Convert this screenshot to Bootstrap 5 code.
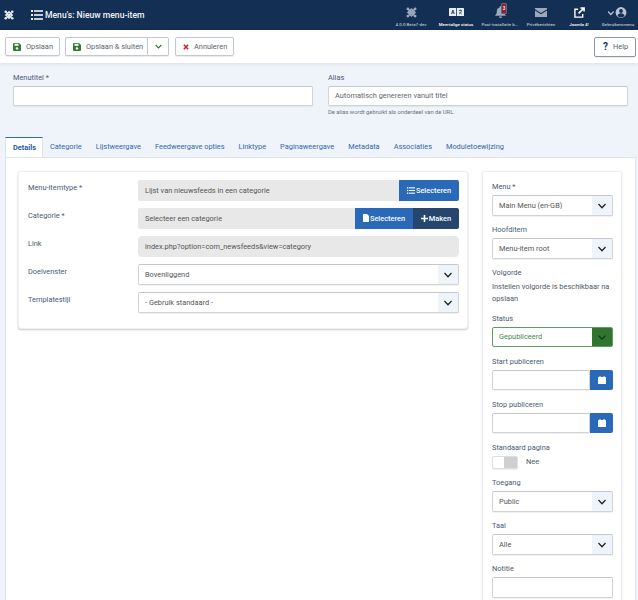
<!DOCTYPE html>
<html lang="nl">
<head>
<meta charset="utf-8">
<title>Menu's: Nieuw menu-item</title>
<link rel="stylesheet" href="https://cdn.jsdelivr.net/npm/bootstrap@5.3.0/dist/css/bootstrap.min.css">
<style>
html,body{height:600px;overflow:hidden}
body{font-family:Roboto,"Liberation Sans",sans-serif;font-size:7.4px;line-height:9px;background:#eff3fa;color:#3f4a5c}
svg{display:block;flex:none}
.topbar{height:30px;background:#132f53;color:#fff}
.logo{width:31px;padding-left:4px}
.page-title{font-size:8.6px;font-weight:500;gap:2px;color:#f1f4f8}
.status-list{margin-left:auto}
.status-item{height:30px;padding-top:4px;color:#b9c3d1;font-size:4.4px;line-height:5px;font-weight:500;white-space:nowrap;overflow:hidden}
.status-item .ico{height:16px;display:flex;align-items:center;justify-content:center;margin-bottom:2px;position:relative}
.status-item.lit{color:#fff}
.s1{width:46px}.s2{width:44px}.s3{width:44px}.s4{width:38px}.s5{width:38px}.s6{width:40px}
.toolbar{height:33px;background:#fff;padding:7px 2px 0 5px;box-shadow:0 1px 3px rgba(40,60,90,.1);position:relative}
.btn-tool{display:inline-flex;align-items:center;height:19px;padding:0 0 0 7px;gap:5px;font-size:7.4px;line-height:1;white-space:nowrap;color:#5b6470;background:#fff;border:1px solid #c4c8cd;border-radius:2px;box-shadow:0 1px 1px rgba(0,0,0,.08)}
.b-save{width:55px}
.b-cancel{width:59px;margin-left:6px}
.b-group{margin-left:5px}
.btn-tool.split-l{border-radius:2px 0 0 2px;border-right:0;width:82px}
.btn-tool.split-r{border-radius:0 2px 2px 0;padding:0 6px 0 7px;width:22px}
.btn-help{margin-left:auto;border-color:#8f979f;color:#555e68;padding:0 0 0 8px;height:20px;width:42px}
.top-fields{padding:9.5px 10px 0 13px;gap:15px;height:67px}
.top-fields>div{width:300px}
.flabel{font-size:7.4px;line-height:9px;color:#4a5a74;display:block;margin:0 0 4px}
.fc{display:block;width:100%;height:20.5px;padding:0 6px;font-size:7.4px;line-height:1;color:#555;background:#fff;border:1px solid #cfd3d8;border-top-color:#c4c8ce;border-radius:2px;box-shadow:0 1px 1px rgba(0,0,0,.06);outline:0}
.fc::placeholder{color:#5f6670;opacity:1}
.fs{appearance:none;background:#fff url("data:image/svg+xml,%3Csvg xmlns='http://www.w3.org/2000/svg' viewBox='0 0 20 20'%3E%3Crect width='20' height='20' fill='%23eff3fa'/%3E%3Cpath d='M6.500 8.500l3.500 3.500 3.500-3.500' fill='none' stroke='%23222' stroke-width='1.300'/%3E%3C/svg%3E") no-repeat right center/20px 20px}
.fs.ok{border-color:#5f9c5f;color:#3f8a3f;background-image:url("data:image/svg+xml,%3Csvg xmlns='http://www.w3.org/2000/svg' viewBox='0 0 20 20'%3E%3Crect width='20' height='20' fill='%232f7530'/%3E%3Cpath d='M6.500 8.500l3.500 3.500 3.500-3.500' fill='none' stroke='%23132' stroke-width='1.300'/%3E%3C/svg%3E");box-shadow:none}
.ro{background:#e8e8e8;border-color:#e8e8e8;box-shadow:none;display:flex;align-items:center;border-radius:2px 0 0 2px;flex:1;min-width:0}
.hint{font-size:5.8px;line-height:7px;color:#6a7280;margin-top:3px}
.tabs{height:27px;padding-left:5px;align-items:flex-end;margin:0}
.tabs a{display:block;height:20px;padding:6px 7px 0;font-size:7.4px;line-height:1;color:#2f67b5;text-decoration:none;white-space:nowrap}
.tabs a.active{width:38px;background:#fff;color:#2a5a9e;font-weight:700;border-top:1px solid #2a69b8;border-left:1px solid #dfe3ea;border-right:1px solid #dfe3ea;padding:6px 0 0 7px}
.tab-body{margin:0 2px 0 5px;height:460px;background:#fff;border:1px solid #dfe3ea;padding:13px 13px 0 12px;gap:14px}
.pane-l{width:450px;height:158px;background:#fff;border:1px solid #eceef1;border-radius:3px;box-shadow:0 1px 2px rgba(0,0,0,.22);padding:8px 8px 0 9px}
.frow{margin-bottom:7.5px;height:20.5px}
.frow .flabel{width:110px;margin:0;padding-top:2.5px;flex:none}
.frow .ctrl{flex:1;min-width:0}
.btn-b{height:20.5px;display:inline-flex;align-items:center;justify-content:center;gap:1px;color:#fff;font-size:7.4px;font-weight:500;line-height:1;background:#2a69b8;border:0;padding:0;flex:none}
.btn-b.dark{background:#24466f}
.w60{width:60px;border-radius:0 2px 2px 0}.w58{width:58px}.w46{width:46px;border-radius:0 2px 2px 0}
.pane-r{width:140px;height:440px;background:#fff;border:1px solid #eceef1;border-radius:3px 3px 0 0;box-shadow:0 1px 2px rgba(0,0,0,.15);padding:10px 8px 0 9px}
.g{margin-bottom:9.5px}
.cal{width:23px;height:20.5px;border-radius:0 2px 2px 0;flex:none}
.txt{font-size:7.4px;line-height:11.5px;color:#4e5866;margin:0}
.sw{width:26px;height:13px;border:1px solid #dcdfe3;border-radius:2px;background:#fff;box-shadow:0 1px 1px rgba(0,0,0,.08)}
.sw i{display:block;margin-left:auto;width:13px;height:100%;background:#cfcfcf}
.badge-n{position:absolute;left:50%;top:-1px;margin-left:1px;width:6px;height:11px;background:#8d1f30;border:1px solid #5a6a80;color:#fff;font-size:4.5px;line-height:9px;text-align:center;border-radius:1px}
</style>
</head>
<body>
<header class="topbar d-flex align-items-center">
  <div class="logo">
    <svg width="10" height="10" viewBox="0 0 20 20" fill="none" stroke="#e6ebf2" stroke-width="3.4"><path d="M5 5l10 10M15 5L5 15M4 10l6-6 6 6-6 6z" /><circle cx="3.500" cy="3.500" r="2.600" fill="#e6ebf2" stroke="none"/><circle cx="16.500" cy="3.500" r="2.600" fill="#e6ebf2" stroke="none"/><circle cx="3.500" cy="16.500" r="2.600" fill="#e6ebf2" stroke="none"/><circle cx="16.500" cy="16.500" r="2.600" fill="#e6ebf2" stroke="none"/></svg>
  </div>
  <div class="page-title d-flex align-items-center">
    <svg width="12" height="10" viewBox="0 0 12 10" fill="#f1f4f8"><rect x="0" y="0" width="2" height="2"/><rect x="3" y=".2" width="9" height="1.6"/><rect x="0" y="4" width="2" height="2"/><rect x="3" y="4.2" width="9" height="1.6"/><rect x="0" y="8" width="2" height="2"/><rect x="3" y="8.2" width="9" height="1.6"/></svg>
    <span>Menu's: Nieuw menu-item</span>
  </div>
  <div class="status-list d-flex">
    <div class="status-item s1 text-center"><div class="ico"><svg width="11" height="11" viewBox="0 0 20 20" fill="none" stroke="#9aa8b8" stroke-width="3.400"><path d="M5 5l10 10M15 5L5 15M4 10l6-6 6 6-6 6z"/><circle cx="3.500" cy="3.500" r="2.600" fill="#9aa8b8" stroke="none"/><circle cx="16.500" cy="3.500" r="2.600" fill="#9aa8b8" stroke="none"/><circle cx="3.500" cy="16.500" r="2.600" fill="#9aa8b8" stroke="none"/><circle cx="16.500" cy="16.500" r="2.600" fill="#9aa8b8" stroke="none"/></svg></div>4.0.0 Beta7-dev</div>
    <div class="status-item s2 lit text-center"><div class="ico"><svg width="15" height="8" viewBox="0 0 15 8"><rect width="15" height="8" rx=".5" fill="#e8edf3"/><path d="M7.500 0v8" stroke="#132f53" stroke-width=".8"/><path d="M2.500 6l1.400-4 1.400 4M3 4.800h1.800" stroke="#132f53" fill="none" stroke-width=".8"/><path d="M9.800 2.500h3M11.300 1.500v1M10 6c1.500-.8 2.300-2 2.500-3.500M10.500 4c.5 1 1.300 1.600 2.300 2" stroke="#132f53" fill="none" stroke-width=".7"/></svg></div>Meertalige status</div>
    <div class="status-item s3 text-center"><div class="ico"><svg width="11" height="12" viewBox="0 0 12 13" fill="#9aa8b8"><path d="M6 0a1 1 0 0 1 1 1v.6A4 4 0 0 1 10 5.500c0 3 1 4 2 5H0c1-1 2-2 2-5A4 4 0 0 1 5 1.600V1a1 1 0 0 1 1-1z"/><path d="M4.300 11.300h3.400a1.700 1.700 0 0 1-3.400 0z"/></svg><span class="badge-n">3</span></div>Post-installatie b...</div>
    <div class="status-item s4 text-center"><div class="ico"><svg width="12" height="9" viewBox="0 0 12 9" fill="#9aa8b8"><path d="M0 1.200V0h12v1.200L6 5z"/><path d="M0 2.500V9h12V2.500L6 6.300z"/></svg></div>Privéberichten</div>
    <div class="status-item s5 lit text-center"><div class="ico"><svg width="11" height="11" viewBox="0 0 12 12" fill="none" stroke="#fff" stroke-width="1.500"><path d="M9.500 7.500V11H1V2.500h3.500"/><path d="M5 7l5.500-5.500M7 1h4v4" stroke-width="1.700"/></svg></div>Joomla 4!</div>
    <div class="status-item s6 text-center"><div class="ico"><svg width="20" height="11" viewBox="0 0 20 11"><path d="M0 4.500l2.800 3 2.800-3" fill="none" stroke="#b9c3d1" stroke-width="1.200"/><circle cx="13" cy="5.500" r="5.400" fill="#b9c3d1"/><circle cx="13" cy="4" r="1.900" fill="#132f53"/><path d="M9.500 9a3.600 3.600 0 0 1 7 0 5 5 0 0 1-7 0z" fill="#132f53"/></svg></div>Gebruikersmenu</div>
  </div>
</header>

<div class="toolbar d-flex">
  <button class="btn-tool b-save"><svg width="8" height="8" viewBox="0 0 8 8" fill="#2f7d32"><path d="M0 1a1 1 0 0 1 1-1h5l2 2v5a1 1 0 0 1-1 1H1a1 1 0 0 1-1-1z"/><rect x="1.500" y=".8" width="4" height="2" fill="#fff"/><circle cx="4" cy="5.400" r="1.200" fill="#fff"/></svg>Opslaan</button>
  <div class="d-flex b-group">
    <button class="btn-tool split-l"><svg width="8" height="8" viewBox="0 0 8 8" fill="#2f7d32"><path d="M0 1a1 1 0 0 1 1-1h5l2 2v5a1 1 0 0 1-1 1H1a1 1 0 0 1-1-1z"/><rect x="1.500" y=".8" width="4" height="2" fill="#fff"/><circle cx="4" cy="5.400" r="1.200" fill="#fff"/></svg>Opslaan &amp; sluiten</button>
    <button class="btn-tool split-r"><svg width="7" height="5" viewBox="0 0 7 5"><path d="M.7 1l2.800 2.800L6.300 1" fill="none" stroke="#2f7d32" stroke-width="1.200"/></svg></button>
  </div>
  <button class="btn-tool b-cancel"><svg width="6" height="6" viewBox="0 0 6 6"><path d="M.8.8l4.400 4.400M5.200.8L.8 5.200" stroke="#c8202c" stroke-width="1.500"/></svg>Annuleren</button>
  <button class="btn-tool btn-help"><b style="color:#132f53;font-size:10px;line-height:1">?</b>Help</button>
</div>

<div class="top-fields d-flex">
  <div>
    <label class="flabel">Menutitel *</label>
    <input class="fc" type="text">
  </div>
  <div>
    <label class="flabel">Alias</label>
    <input class="fc" type="text" placeholder="Automatisch genereren vanuit titel">
    <div class="hint">De alias wordt gebruikt als onderdeel van de URL.</div>
  </div>
</div>

<nav class="tabs d-flex">
  <a class="active" href="#">Details</a>
  <a href="#">Categorie</a>
  <a href="#">Lijstweergave</a>
  <a href="#">Feedweergave opties</a>
  <a href="#">Linktype</a>
  <a href="#">Paginaweergave</a>
  <a href="#">Metadata</a>
  <a href="#">Associaties</a>
  <a href="#">Moduletoewijzing</a>
</nav>

<main class="tab-body d-flex align-items-start">
  <section class="pane-l">
    <div class="frow d-flex">
      <label class="flabel">Menu-itemtype *</label>
      <div class="ctrl d-flex"><div class="fc ro">Lijst van nieuwsfeeds in een categorie</div>
      <button class="btn-b w60"><svg width="8" height="7" viewBox="0 0 12 10" fill="#fff"><rect width="2" height="2"/><rect x="3" y=".2" width="9" height="1.600"/><rect y="4" width="2" height="2"/><rect x="3" y="4.200" width="9" height="1.600"/><rect y="8" width="2" height="2"/><rect x="3" y="8.200" width="9" height="1.600"/></svg>Selecteren</button></div>
    </div>
    <div class="frow d-flex">
      <label class="flabel">Categorie *</label>
      <div class="ctrl d-flex"><div class="fc ro">Selecteer een categorie</div>
      <button class="btn-b w58"><svg width="6" height="8" viewBox="0 0 6 8" fill="#fff"><path d="M0 0h4l2 2v6H0z"/></svg>Selecteren</button>
      <button class="btn-b dark w46"><svg width="7" height="7" viewBox="0 0 7 7"><path d="M3.500 0v7M0 3.500h7" stroke="#fff" stroke-width="1.600"/></svg>Maken</button></div>
    </div>
    <div class="frow d-flex">
      <label class="flabel">Link</label>
      <div class="ctrl d-flex"><div class="fc ro rounded-1">index.php?option=com_newsfeeds&amp;view=category</div></div>
    </div>
    <div class="frow d-flex">
      <label class="flabel">Doelvenster</label>
      <div class="ctrl"><select class="fc fs"><option>Bovenliggend</option></select></div>
    </div>
    <div class="frow d-flex">
      <label class="flabel">Templatestijl</label>
      <div class="ctrl"><select class="fc fs"><option>- Gebruik standaard -</option></select></div>
    </div>
  </section>

  <aside class="pane-r">
    <div class="g"><label class="flabel">Menu *</label><select class="fc fs"><option>Main Menu (en-GB)</option></select></div>
    <div class="g"><label class="flabel">Hoofditem</label><select class="fc fs"><option>Menu-item root</option></select></div>
    <div class="g"><label class="flabel">Volgorde</label><p class="txt">Instellen volgorde is beschikbaar na opslaan</p></div>
    <div class="g"><label class="flabel">Status</label><select class="fc fs ok"><option>Gepubliceerd</option></select></div>
    <div class="g"><label class="flabel">Start publiceren</label><div class="d-flex"><input class="fc" type="text"><button class="btn-b cal"><svg width="8" height="8" viewBox="0 0 8 8" fill="#fff"><path d="M0 1.500a.5.5 0 0 1 .5-.5H1.500V0h1v1h3V0h1v1h1a.5.5 0 0 1 .5.5V8H0z"/></svg></button></div></div>
    <div class="g"><label class="flabel">Stop publiceren</label><div class="d-flex"><input class="fc" type="text"><button class="btn-b cal"><svg width="8" height="8" viewBox="0 0 8 8" fill="#fff"><path d="M0 1.500a.5.5 0 0 1 .5-.5H1.500V0h1v1h3V0h1v1h1a.5.5 0 0 1 .5.5V8H0z"/></svg></button></div></div>
    <div class="g"><label class="flabel">Standaard pagina</label><div class="d-flex align-items-center"><div class="sw"><i></i></div><span class="ms-1 ps-1 txt">Nee</span></div></div>
    <div class="g"><label class="flabel">Toegang</label><select class="fc fs"><option>Public</option></select></div>
    <div class="g"><label class="flabel">Taal</label><select class="fc fs"><option>Alle</option></select></div>
    <div class="g"><label class="flabel">Notitie</label><input class="fc" type="text"></div>
  </aside>
</main>
<script src="https://cdn.jsdelivr.net/npm/bootstrap@5.3.0/dist/js/bootstrap.bundle.min.js"></script>
</body>
</html>
